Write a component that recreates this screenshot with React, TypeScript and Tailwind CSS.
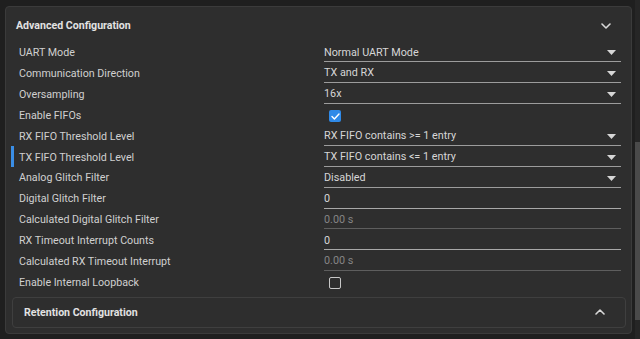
import React from "react";

type Row =
  | { label: string; kind: "select"; value: string }
  | { label: string; kind: "input"; value: string }
  | { label: string; kind: "disabled"; value: string }
  | { label: string; kind: "check"; checked: boolean };

const rows: Row[] = [
  { label: "UART Mode", kind: "select", value: "Normal UART Mode" },
  { label: "Communication Direction", kind: "select", value: "TX and RX" },
  { label: "Oversampling", kind: "select", value: "16x" },
  { label: "Enable FIFOs", kind: "check", checked: true },
  { label: "RX FIFO Threshold Level", kind: "select", value: "RX FIFO contains >= 1 entry" },
  { label: "TX FIFO Threshold Level", kind: "select", value: "TX FIFO contains <= 1 entry" },
  { label: "Analog Glitch Filter", kind: "select", value: "Disabled" },
  { label: "Digital Glitch Filter", kind: "input", value: "0" },
  { label: "Calculated Digital Glitch Filter", kind: "disabled", value: "0.00 s" },
  { label: "RX Timeout Interrupt Counts", kind: "input", value: "0" },
  { label: "Calculated RX Timeout Interrupt", kind: "disabled", value: "0.00 s" },
  { label: "Enable Internal Loopback", kind: "check", checked: false },
];

function Chevron({ up }: { up?: boolean }) {
  return (
    <svg width="10" height="6" viewBox="0 0 10 6" className="block">
      <polyline
        points={up ? "1,5 5,1 9,5" : "1,1 5,5 9,1"}
        fill="none"
        stroke="#d8d8d8"
        strokeWidth="1.6"
        strokeLinecap="round"
        strokeLinejoin="round"
      />
    </svg>
  );
}

function Caret() {
  return (
    <svg width="9" height="5" viewBox="0 0 9 5" className="block">
      <polygon points="0,0 9,0 4.5,5" fill="#d6d6d6" />
    </svg>
  );
}

function Value({ row }: { row: Row }) {
  if (row.kind === "check") {
    return row.checked ? (
      <div className="ml-[5px] w-[12px] h-[12px] rounded-[2px] bg-[#2f8ae8] flex items-center justify-center">
        <svg width="9" height="7" viewBox="0 0 9 7">
          <polyline
            points="1,3.6 3.4,6 8,1"
            fill="none"
            stroke="#ffffff"
            strokeWidth="1.4"
            strokeLinecap="round"
            strokeLinejoin="round"
          />
        </svg>
      </div>
    ) : (
      <div className="ml-[5px] w-[12px] h-[12px] rounded-[2px] border-[1.5px] border-[#c8c8c8]" />
    );
  }
  if (row.kind === "select") {
    return (
      <div className="h-[18px] w-full border-b border-[#9c9c9c] flex items-center justify-between pr-[5px]">
        <span className="text-[10.8px] text-[#d6d6d6] leading-none">{row.value}</span>
        <Caret />
      </div>
    );
  }
  if (row.kind === "input") {
    return (
      <div className="h-[18px] w-full border-b border-[#a8a8a8] flex items-center">
        <span className="text-[10.8px] text-[#d6d6d6] leading-none">{row.value}</span>
      </div>
    );
  }
  return (
    <div className="h-[17px] w-full border-b border-[#5e5e5e] flex items-center">
      <span className="text-[10.8px] text-[#858585] leading-none">{row.value}</span>
    </div>
  );
}

export default function App() {
  return (
    <div className="w-[640px] h-[339px] bg-[#1f1f1f] flex overflow-hidden font-['Roboto',sans-serif]">
      <div className="pl-[5px] pt-[6px]">
        <div className="w-[627px] h-[328px] rounded-[4px] border border-[#3b3b3b] bg-[#2e2e2e] flex flex-col pt-[2px]">
          <div className="h-[34px] flex items-center justify-between pl-[10px] pr-[20px]">
            <span className="text-[10.6px] font-bold text-[#e2e2e2]">Advanced Configuration</span>
            <Chevron />
          </div>
          <div className="flex flex-col">
            {rows.map((r, i) => (
              <div
                key={i}
                className="relative h-[20.9px] grid grid-cols-[305px_297px] items-center pl-[13px]"
              >
                {r.label === "TX FIFO Threshold Level" && (
                  <div className="absolute left-[5px] top-[-1px] w-[3px] h-[21px] bg-[#3a8ee6]" />
                )}
                <span className="text-[10.7px] text-[#d0d0d0] leading-none">{r.label}</span>
                <div className="flex items-center">
                  <Value row={r} />
                </div>
              </div>
            ))}
          </div>
          <div className="mt-[3px] mr-[5px] ml-[6px] h-[31px] rounded-[4px] border border-[#3f3f3f] bg-[#2e2e2e] flex items-center justify-between pl-[11px] pr-[20px]">
            <span className="text-[10.6px] font-bold text-[#e2e2e2] pt-[1px]">Retention Configuration</span>
            <Chevron up />
          </div>
        </div>
      </div>
      <div className="ml-[3px] w-[5px] h-full bg-[#262626] pt-[142px]">
        <div className="w-full h-[178px] bg-[#4a4a4a]" />
      </div>
    </div>
  );
}
